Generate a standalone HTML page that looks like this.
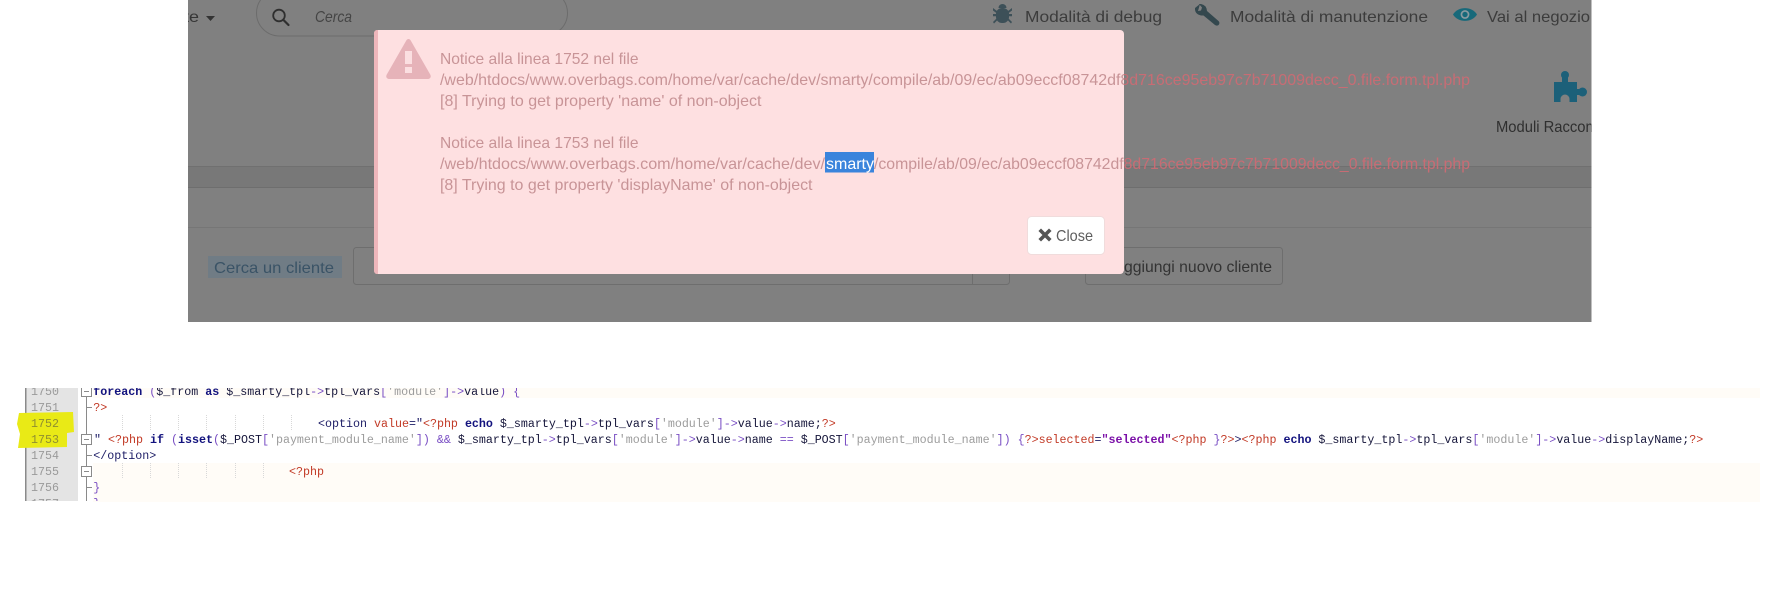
<!DOCTYPE html>
<html lang="it">
<head>
<meta charset="utf-8">
<title>Notice</title>
<style>
html,body{margin:0;padding:0;background:#fff;width:1780px;height:600px;overflow:hidden}
svg{display:block}
.s{font-family:"Liberation Sans",sans-serif;font-size:16px}
.m{font-family:"Liberation Mono",monospace;font-size:11.67px;white-space:pre;fill:#15153a}
.n{font-family:"Liberation Mono",monospace;font-size:11.67px;fill:#9a9a9a}
.y{fill:#8f8f30}
.k{fill:#12127e;font-weight:bold}
.o{fill:#7a4fc4}
.q{fill:#9c9c9c}
.t{fill:#c23a26}
.h{fill:#1d1d66}
.p{fill:#7b10a8;font-weight:bold}
</style>
</head>
<body>
<svg width="1780" height="600" viewBox="0 0 1780 600" xmlns="http://www.w3.org/2000/svg">
<defs>
<clipPath id="gc"><rect x="188" y="0" width="1403.5" height="322"/></clipPath>
<clipPath id="cc"><rect x="0" y="388" width="1780" height="113"/></clipPath>
<linearGradient id="tg" gradientUnits="userSpaceOnUse" x1="0" y1="0" x2="1780" y2="0">
<stop offset="0.6315" stop-color="#c89497"/>
<stop offset="0.6315" stop-color="#c76c74"/>
</linearGradient>
</defs>

<!-- dimmed page -->
<rect x="188" y="0" width="1403.5" height="322" fill="#808080"/>
<g clip-path="url(#gc)">
<rect x="188" y="166" width="1404" height="21" fill="#787878"/>
<rect x="188" y="166" width="1404" height="1" fill="#707070"/>
<rect x="188" y="187" width="1404" height="1" fill="#6e6e6e"/>
<rect x="188" y="227" width="1404" height="1" fill="#767676"/>

<text class="s" x="184" y="22" fill="#363636" textLength="15" lengthAdjust="spacingAndGlyphs">te</text>
<path d="M206 16h9l-4.500 5z" fill="#333"/>

<rect x="256.500" y="-10" width="311" height="46" rx="23" fill="none" stroke="#6c6c6c"/>
<circle cx="279" cy="15.500" r="5.800" fill="none" stroke="#2f2f2f" stroke-width="1.800"/>
<path d="M283.500 20l5 5" stroke="#2f2f2f" stroke-width="2.200" stroke-linecap="round"/>
<text class="s" x="315" y="22" fill="#454545" font-style="italic" textLength="37" lengthAdjust="spacingAndGlyphs">Cerca</text>

<!-- bug -->
<g fill="#3d5058">
<rect x="996" y="8" width="13" height="15" rx="6"/>
<path d="M998.500 8a4 4 0 0 1 8 0z"/>
<path d="M993 8l4 3v2.500l-4-3zM1012 8l-4 3v2.500l4-3zM993 14h4v2.200h-4zM1008 14h4v2.200h-4zM993 22l4-4v2.500l-3 3zM1012 22l-4-4v2.500l3 3z"/>
</g>
<text class="s" x="1025" y="22" fill="#3c3c3c" textLength="137" lengthAdjust="spacingAndGlyphs">Modalità di debug</text>

<!-- wrench -->
<path d="M1200 4l-5 4q-.5 6 6 7.500l2.500 0l11.500 9.500q2.500 1.500 4-.5q1-2-.5-3.500l-11.500-10q-.5-6-6-7l-2 0l3 3.500l-1 3l-3 .5z" fill="#34484e"/>
<text class="s" x="1230" y="22" fill="#3c3c3c" textLength="198" lengthAdjust="spacingAndGlyphs">Modalità di manutenzione</text>

<!-- eye -->
<path d="M1453 14.500C1458 6 1472 6 1477 14.500C1472 23 1458 23 1453 14.500Z" fill="#17697a"/>
<circle cx="1465" cy="14.500" r="4.400" fill="#8a9aa0"/>
<circle cx="1465" cy="14.500" r="2.700" fill="#17697a"/>
<text class="s" x="1487" y="22" fill="#3c3c3c" textLength="103" lengthAdjust="spacingAndGlyphs">Vai al negozio</text>

<!-- puzzle -->
<g fill="#1c6079">
<circle cx="1565" cy="75" r="4"/>
<rect x="1562" y="76" width="6" height="8"/>
<rect x="1554" y="82" width="23" height="20"/>
<circle cx="1582.500" cy="92" r="4.500"/>
<rect x="1575" y="89" width="6" height="6"/>
</g>
<circle cx="1565" cy="99" r="4.500" fill="#808080"/>
<rect x="1560.500" y="99" width="9" height="3" fill="#808080"/>
<text class="s" x="1496" y="132" fill="#2f2f2f" textLength="142" lengthAdjust="spacingAndGlyphs">Moduli Raccomandati</text>

<!-- form -->
<rect x="208" y="256" width="134" height="22" fill="#707c85"/>
<text class="s" x="214" y="273" fill="#3a5366" textLength="120" lengthAdjust="spacingAndGlyphs">Cerca un cliente</text>
<rect x="353.500" y="247.500" width="656" height="37" rx="3" fill="none" stroke="#6e6e6e"/>
<rect x="972" y="248" width="1" height="36" fill="#6e6e6e"/>
<rect x="1085.500" y="247.500" width="197" height="37" rx="3" fill="none" stroke="#6e6e6e"/>
<text class="s" x="1113.500" y="272" fill="#333" textLength="158.500" lengthAdjust="spacingAndGlyphs">Aggiungi nuovo cliente</text>
</g>

<!-- modal -->
<rect x="374" y="30" width="750" height="244" rx="4" fill="#fee0e1"/>
<path d="M378 30h-1a3 3 0 0 0-3 3v238a3 3 0 0 0 3 3h1z" fill="#eeb6bb"/>
<path d="M408.500 39q1.500 0 2.500 2l19.500 34q1 3-2 4h-40q-3-1-2-4l19.500-34q1-2 2.500-2z" fill="#e6b3b9"/>
<rect x="405" y="51" width="7" height="13" fill="#fbdfe1"/>
<rect x="405" y="67" width="7" height="6" fill="#fbdfe1"/>

<rect x="825" y="152" width="49" height="20.500" fill="#3a84dc"/>

<text class="s" x="440" y="64" fill="url(#tg)" textLength="198.500" lengthAdjust="spacingAndGlyphs">Notice alla linea 1752 nel file</text>
<text class="s" x="440" y="85" fill="url(#tg)" textLength="1030" lengthAdjust="spacingAndGlyphs">/web/htdocs/www.overbags.com/home/var/cache/dev/smarty/compile/ab/09/ec/ab09eccf08742df8d716ce95eb97c7b71009decc_0.file.form.tpl.php</text>
<text class="s" x="440" y="106" fill="url(#tg)" textLength="321.500" lengthAdjust="spacingAndGlyphs">[8] Trying to get property 'name' of non-object</text>

<text class="s" x="440" y="148" fill="url(#tg)" textLength="198.500" lengthAdjust="spacingAndGlyphs">Notice alla linea 1753 nel file</text>
<text class="s" x="440" y="169" fill="url(#tg)" textLength="385" lengthAdjust="spacingAndGlyphs">/web/htdocs/www.overbags.com/home/var/cache/dev/</text>
<text class="s" x="826" y="169" fill="#fff" textLength="48" lengthAdjust="spacingAndGlyphs">smarty</text>
<text class="s" x="874" y="169" fill="url(#tg)" textLength="596" lengthAdjust="spacingAndGlyphs">/compile/ab/09/ec/ab09eccf08742df8d716ce95eb97c7b71009decc_0.file.form.tpl.php</text>
<text class="s" x="440" y="190" fill="url(#tg)" textLength="372.500" lengthAdjust="spacingAndGlyphs">[8] Trying to get property 'displayName' of non-object</text>

<rect x="1027.500" y="216.500" width="77" height="38" rx="4" fill="#fff" stroke="#f0dcdc"/>
<path d="M1041 231l4 4M1049 231l-4 4M1041 239l4-4M1049 239l-4-4" stroke="#555" stroke-width="3.600" stroke-linecap="square"/>
<text class="s" x="1056" y="241" fill="#5e5e5e" textLength="37" lengthAdjust="spacingAndGlyphs">Close</text>

<!-- code editor -->
<rect x="93" y="388" width="1667" height="10" fill="#fffcf7"/>
<rect x="93" y="463" width="1667" height="39" fill="#fffcf7"/>
<g clip-path="url(#cc)">
<rect x="25" y="388" width="53" height="113" fill="#e4e4e4"/>
<rect x="25" y="388" width="1.500" height="113" fill="#8a8a8a"/>
<rect x="86" y="388" width="1" height="113" fill="#8a8a8a"/>

<path d="M19 413l54-1 1 20-7 1v14l-49 1 2-14-3-10z" fill="#e9ea16"/>

<g fill="#fff" stroke="#8a8a8a">
<rect x="81.500" y="386.500" width="10" height="10"/>
<rect x="81.500" y="434.500" width="10" height="10"/>
<rect x="81.500" y="466.500" width="10" height="10"/>
</g>
<path d="M84 391.500h5M84 439.500h5M84 471.500h5M87 407.500h5M87 455.500h5M87 487.500h5" stroke="#8a8a8a"/>

<g stroke="#d8d8d8" stroke-dasharray="1 1">
<path d="M122.500 415v16M150.500 415v16M178.500 415v16M206.500 415v16M235.500 415v16M263.500 415v16M291.500 415v16"/>
<path d="M122.500 463v16M150.500 463v16M178.500 463v16M206.500 463v16M235.500 463v16M263.500 463v16"/>
</g>

<text class="n" x="31" y="395">1750</text>
<text class="n" x="31" y="411">1751</text>
<text class="n y" x="31" y="427">1752</text>
<text class="n y" x="31" y="443">1753</text>
<text class="n" x="31" y="459">1754</text>
<text class="n" x="31" y="475">1755</text>
<text class="n" x="31" y="491">1756</text>
<text class="n" x="31" y="507">1757</text>

<text class="m" x="93.300" y="395"><tspan class="k">foreach</tspan> <tspan class="o">(</tspan>$_from <tspan class="k">as</tspan> $_smarty_tpl<tspan class="o">-&gt;</tspan>tpl_vars<tspan class="o">[</tspan><tspan class="q">'module'</tspan><tspan class="o">]-&gt;</tspan>value<tspan class="o">) {</tspan></text>
<text class="m" x="93.300" y="411"><tspan class="t">?&gt;</tspan></text>
<text class="m" x="318" y="427"><tspan class="h">&lt;option</tspan> <tspan class="t">value</tspan><tspan class="h">="</tspan><tspan class="t">&lt;?php</tspan> <tspan class="k">echo</tspan> $_smarty_tpl<tspan class="o">-&gt;</tspan>tpl_vars<tspan class="o">[</tspan><tspan class="q">'module'</tspan><tspan class="o">]-&gt;</tspan>value<tspan class="o">-&gt;</tspan>name;<tspan class="t">?&gt;</tspan></text>
<text class="m" x="94" y="443"><tspan class="h">"</tspan> <tspan class="t">&lt;?php</tspan> <tspan class="k">if</tspan> <tspan class="o">(</tspan><tspan class="k">isset</tspan><tspan class="o">(</tspan>$_POST<tspan class="o">[</tspan><tspan class="q">'payment_module_name'</tspan><tspan class="o">])</tspan> <tspan class="o">&amp;&amp;</tspan> $_smarty_tpl<tspan class="o">-&gt;</tspan>tpl_vars<tspan class="o">[</tspan><tspan class="q">'module'</tspan><tspan class="o">]-&gt;</tspan>value<tspan class="o">-&gt;</tspan>name <tspan class="o">==</tspan> $_POST<tspan class="o">[</tspan><tspan class="q">'payment_module_name'</tspan><tspan class="o">])</tspan> <tspan class="o">{</tspan><tspan class="t">?&gt;selected</tspan><tspan class="h">=</tspan><tspan class="p">"selected"</tspan><tspan class="t">&lt;?php</tspan> <tspan class="o">}</tspan><tspan class="t">?&gt;</tspan><tspan class="h">&gt;</tspan><tspan class="t">&lt;?php</tspan> <tspan class="k">echo</tspan> $_smarty_tpl<tspan class="o">-&gt;</tspan>tpl_vars<tspan class="o">[</tspan><tspan class="q">'module'</tspan><tspan class="o">]-&gt;</tspan>value<tspan class="o">-&gt;</tspan>displayName;<tspan class="t">?&gt;</tspan></text>
<text class="m" x="93.300" y="459"><tspan class="h">&lt;/option&gt;</tspan></text>
<text class="m" x="289" y="475"><tspan class="t">&lt;?php</tspan></text>
<text class="m" x="93.300" y="491"><tspan class="o">}</tspan></text>
<text class="m" x="93.300" y="507"><tspan class="o">}</tspan></text>
</g>
</svg>
</body>
</html>
